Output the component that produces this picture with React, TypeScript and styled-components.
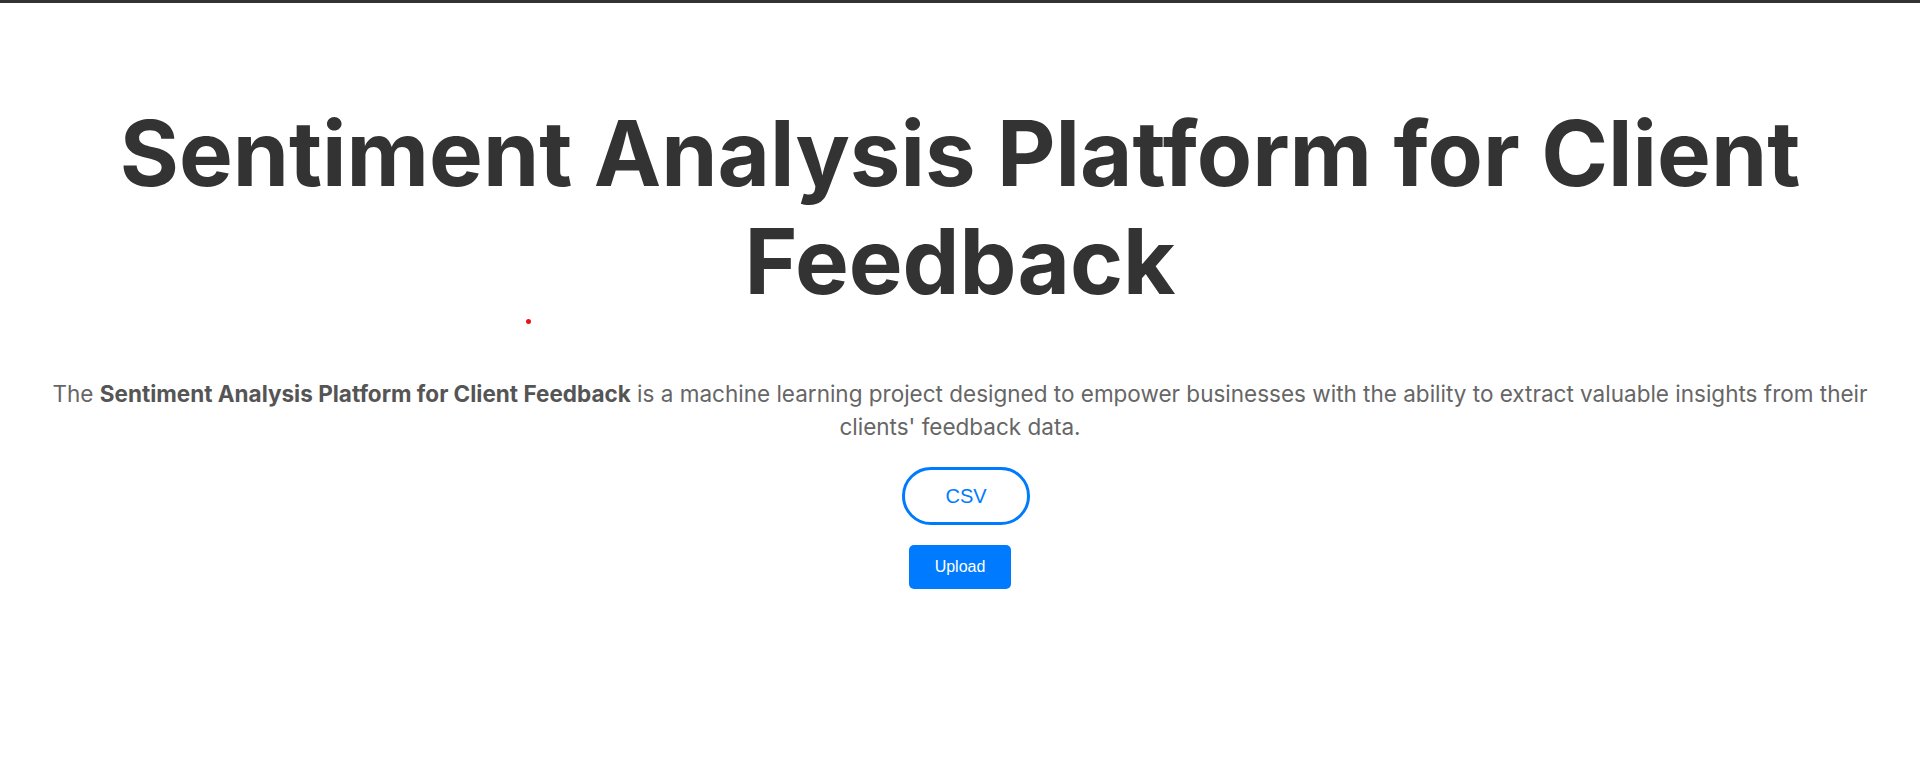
import React from "react";
import styled, { createGlobalStyle } from "styled-components";

const GlobalStyle = createGlobalStyle`
  html, body {
    margin: 0;
    padding: 0;
    background: #ffffff;
  }
  body {
    font-family: Inter, "Noto Sans", Arial, sans-serif;
  }
`;

const Page = styled.div`
  position: relative;
  min-height: 767px;
  display: flex;
  flex-direction: column;
`;

const TopBar = styled.div`
  height: 3px;
  background: #333333;
`;

const Main = styled.main`
  display: flex;
  flex-direction: column;
  align-items: center;
  padding: 96px 30px 0;
`;

const Title = styled.h1`
  margin: 0;
  font-family: Inter, "Noto Sans", sans-serif;
  font-weight: 700;
  font-size: 90.4px;
  line-height: 108px;
  color: #333333;
  text-align: center;
  max-width: 1760px;
`;

const Description = styled.p`
  margin: 62px 0 0;
  font-family: Inter, "Noto Sans", sans-serif;
  font-size: 22.5px;
  line-height: 33px;
  color: #666666;
  text-align: center;

  strong {
    font-weight: 700;
    color: #555555;
  }
`;

const FormatPill = styled.button`
  margin: 24px 0 0 12px;
  box-sizing: border-box;
  width: 128px;
  height: 58px;
  border: 3px solid #007bff;
  border-radius: 29px;
  background: #ffffff;
  color: #007bff;
  font-family: "Liberation Sans", Arial, sans-serif;
  font-size: 20px;
  cursor: pointer;
  display: flex;
  align-items: center;
  justify-content: center;
`;

const UploadButton = styled.button`
  margin-top: 20px;
  box-sizing: border-box;
  width: 102px;
  height: 44px;
  border: none;
  border-radius: 5px;
  background: #007bff;
  color: #ffffff;
  font-family: "Liberation Sans", Arial, sans-serif;
  font-size: 16px;
  cursor: pointer;
`;

const Dot = styled.span`
  position: absolute;
  left: 526px;
  top: 319px;
  width: 5px;
  height: 5px;
  border-radius: 50%;
  background: #e8141b;
`;

export default function App() {
  return (
    <>
      <GlobalStyle />
      <Page>
        <TopBar />
        <Main>
          <Title>
            Sentiment Analysis Platform for Client
            <br />
            Feedback
          </Title>
          <Description>
            The <strong>Sentiment Analysis Platform for Client Feedback</strong> is a machine
            learning project designed to empower businesses with the ability to extract valuable
            insights from their clients' feedback data.
          </Description>
          <FormatPill type="button">CSV</FormatPill>
          <UploadButton type="button">Upload</UploadButton>
        </Main>
        <Dot />
      </Page>
    </>
  );
}
